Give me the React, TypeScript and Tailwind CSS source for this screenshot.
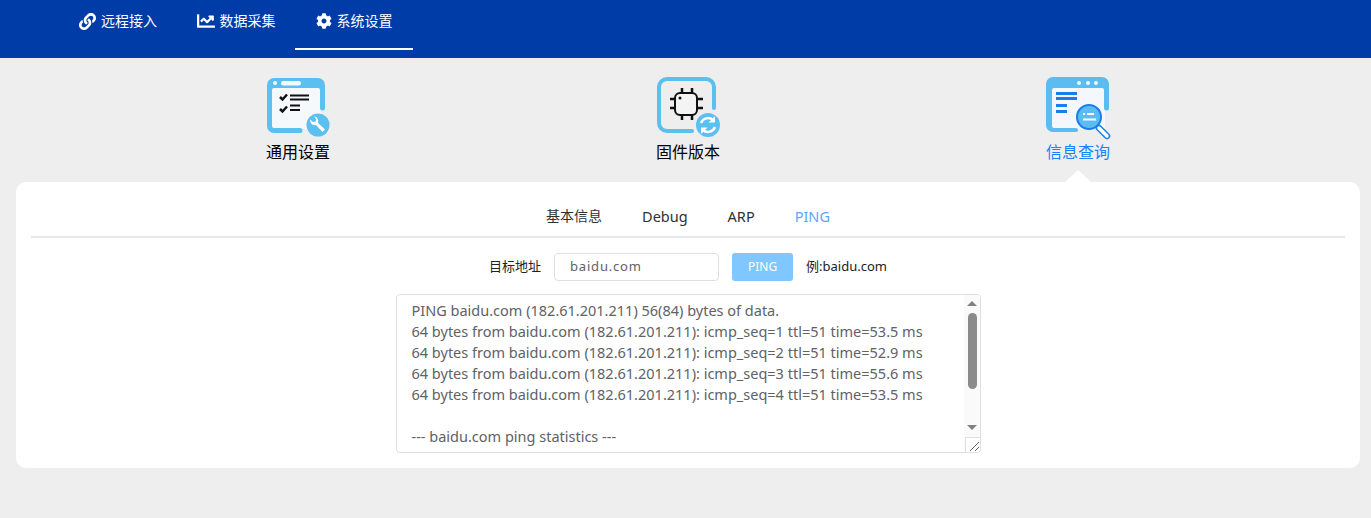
import { FaChartLine, FaCog, FaLink } from 'react-icons/fa'

const font = { fontFamily: '"Noto Sans", "Noto Sans CJK SC", sans-serif' }

function GeneralIcon() {
  return (
    <svg width="66" height="64" viewBox="0 0 66 64" fill="none" className="overflow-visible">
      <rect x="5" y="11" width="50" height="42" fill="#f6f9fb" />
      <path d="M1 9a7 7 0 0 1 7-7h44a7 7 0 0 1 7 7v23a2.500 2.500 0 0 1-5 0V14a2 2 0 0 0-2-2H8a2 2 0 0 0-2 2v36a2 2 0 0 0 2 2h26a2.500 2.500 0 0 1 0 5H8a7 7 0 0 1-7-7z" fill="#5bc0f0" />
      <rect x="15" y="5" width="20" height="4.500" rx="2.250" fill="#f0f9fe" />
      <circle cx="9" cy="7" r="2" fill="#f0f9fe" />
      <path d="M14 21l2.500 2.500 4.500-5M14 33l2.500 2.500 4.500-5" stroke="#111" strokeWidth="2.500" />
      <path d="M24 19.500h19M24 23.500h19M24 29.500h10M24 34h10" stroke="#111" strokeWidth="2.200" />
      <circle cx="52" cy="49" r="11.500" fill="#5bc0f0" />
      <path d="M48 40.500l2.500 3-1 2-2.500.5-3-2.500c0 4 3 6.500 6 5.500l6.500 7 2.500-2.500-7-6.500c1-3-1-6.500-4-6.500z" fill="#fff" />
    </svg>
  )
}

function FirmwareIcon() {
  return (
    <svg width="66" height="64" viewBox="0 0 66 64" fill="none" className="overflow-visible">
      <path d="M58 32V11a8 8 0 0 0-8-8H11a8 8 0 0 0-8 8v36a8 8 0 0 0 8 8h25" stroke="#5bc0f0" strokeWidth="4" strokeLinecap="round" />
      <rect x="19" y="17" width="22" height="22" rx="5" stroke="#111" strokeWidth="2" fill="#f4f4f4" />
      <path d="M26 12v5M36 12v5M26 39v5M36 39v5M14 23h5M14 32h5M41 23h6M41 32h6" stroke="#111" strokeWidth="2.500" />
      <circle cx="24" cy="22" r="1.500" fill="#111" />
      <circle cx="52" cy="49" r="12" fill="#5bc0f0" />
      <path d="M45 47a7.500 7.500 0 0 1 12-3M59 51a7.500 7.500 0 0 1-12 3" stroke="#fff" strokeWidth="2.500" />
      <path d="M59 40v6.500h-6.500zM45 58v-6.500h6.500z" fill="#fff" />
    </svg>
  )
}

function QueryIcon() {
  return (
    <svg width="66" height="64" viewBox="0 0 66 64" fill="none" className="overflow-visible">
      <rect x="5" y="11" width="54" height="42" fill="#f4f8fc" />
      <path d="M0 8a7 7 0 0 1 7-7h49a7 7 0 0 1 7 7v24a2.500 2.500 0 0 1-5 0V14a2 2 0 0 0-2-2H8a2 2 0 0 0-2 2v36a2 2 0 0 0 2 2h22a2 2 0 0 1 0 4H7a7 7 0 0 1-7-7z" fill="#5bbcf2" />
      <circle cx="33" cy="7" r="2" fill="#f0f9fe" />
      <circle cx="42" cy="7" r="2" fill="#f0f9fe" />
      <circle cx="50" cy="7" r="2" fill="#f0f9fe" />
      <path d="M10 17.500h21M10 22.500h21M10 29.500h11M10 35.500h11" stroke="#1a7ee8" strokeWidth="3" />
      <circle cx="43" cy="41" r="12" fill="#5bbcf2" stroke="#1a7ee8" strokeWidth="2" />
      <path d="M37 38h2M41 38h7M37 43.500h13" stroke="#fff" strokeWidth="2" />
      <path d="M53 52l8 8" stroke="#1a7ee8" strokeWidth="6.500" strokeLinecap="round" />
      <path d="M53 52l8 8" stroke="#fff" strokeWidth="3.500" strokeLinecap="round" />
    </svg>
  )
}

const pingLines = [
  'PING baidu.com (182.61.201.211) 56(84) bytes of data.',
  '64 bytes from baidu.com (182.61.201.211): icmp_seq=1 ttl=51 time=53.5 ms',
  '64 bytes from baidu.com (182.61.201.211): icmp_seq=2 ttl=51 time=52.9 ms',
  '64 bytes from baidu.com (182.61.201.211): icmp_seq=3 ttl=51 time=55.6 ms',
  '64 bytes from baidu.com (182.61.201.211): icmp_seq=4 ttl=51 time=53.5 ms',
  '\u00a0',
  '--- baidu.com ping statistics ---',
]

export default function App() {
  return (
    <div className="min-h-[518px] bg-[#eeeeee]" style={font}>
      <nav className="flex h-[58px] items-start bg-[#003ca7] pl-[59px] text-sm text-white">
        <a className="flex h-[42px] w-[118px] items-center justify-center gap-[5px]">
          <FaLink className="text-[17px]" />
          远程接入
        </a>
        <a className="flex h-[42px] w-[118px] items-center justify-center gap-[5px]">
          <FaChartLine className="text-[18px]" />
          数据采集
        </a>
        <a className="flex h-[50px] w-[118px] items-start justify-center gap-[5px] border-b-2 border-white pt-[11px]">
          <FaCog className="mt-[2px] text-[16px]" />
          系统设置
        </a>
      </nav>

      <div className="pl-4 pr-[11px]">
        <div className="flex h-[124px] justify-center">
          {[
            { label: '通用设置', icon: <GeneralIcon />, active: false },
            { label: '固件版本', icon: <FirmwareIcon />, active: false },
            { label: '信息查询', icon: <QueryIcon />, active: true },
          ].map((item) => (
            <div key={item.label} className="relative flex w-[390px] flex-col items-center pt-[18px]">
              <div className="flex h-[64px] items-start pl-[2px]">{item.icon}</div>
              <span className={`mt-[1px] text-base leading-[22px] ${item.active ? 'text-[#1a80ff]' : 'text-black'}`}>
                {item.label}
              </span>
              {item.active && (
                <div className="absolute bottom-0 left-1/2 h-0 w-0 -translate-x-1/2 border-x-[13px] border-b-[12px] border-x-transparent border-b-white" />
              )}
            </div>
          ))}
        </div>

        <section className="h-[286px] rounded-[10px] bg-white px-[15px] pt-[24px]">
          <div className="flex h-[32px] justify-center gap-[40px] border-b-2 border-[#e4e7ed] text-sm leading-[20px] text-[#303133]">
            <span>基本信息</span>
            <span className="text-[14.5px]">Debug</span>
            <span className="text-[14.5px]">ARP</span>
            <span className="text-[14.5px] text-[#60a5fa]">PING</span>
          </div>

          <div className="mt-[15px] flex items-center justify-center gap-[13px] text-[13px] text-[#222]">
            <span>目标地址</span>
            <div className="flex h-[28px] w-[165px] items-center rounded border border-[#dcdfe6] pl-[15px] tracking-[0.8px] text-[#606266]">
              baidu.com
            </div>
            <button className="h-[28px] w-[61px] rounded-[3px] bg-[#80c6ff] text-center text-xs text-white">PING</button>
            <span>例:baidu.com</span>
          </div>

          <div className="relative mx-auto mt-[13px] flex h-[159px] w-[585px] overflow-hidden rounded border border-[#dcdfe6]">
            <div className="flex-1 pl-[15px] pt-[5px] text-[14.5px] leading-[21px] text-[#606266]">
              {pingLines.map((line, i) => (
                <div key={i}>{line}</div>
              ))}
            </div>
            <div className="flex w-[16px] flex-col items-center bg-[#fafafa] pl-[1px] pt-[6px]">
              <div className="h-0 w-0 border-x-[5px] border-b-[5px] border-x-transparent border-b-[#808080]" />
              <div className="mt-[7px] h-[76px] w-[9px] rounded-full bg-[#8a8a8a]" />
              <div className="mt-[36px] h-0 w-0 border-x-[5px] border-t-[5px] border-x-transparent border-t-[#808080]" />
            </div>
            <div className="absolute bottom-0 right-0 h-[15px] w-[15px] border-l border-t border-[#dcdfe6] bg-white">
              <svg width="14" height="14" viewBox="0 0 14 14" stroke="#666" strokeWidth="1">
                <path d="M4 13l9-9M9 13l4-4" />
              </svg>
            </div>
          </div>
        </section>
      </div>
    </div>
  )
}
